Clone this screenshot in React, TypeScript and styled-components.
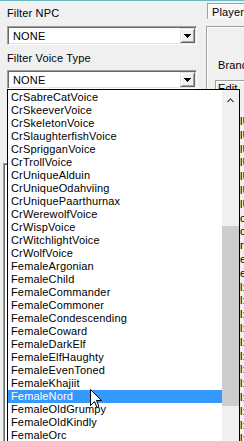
import React from "react";
import styled, { createGlobalStyle } from "styled-components";

const GlobalStyle = createGlobalStyle`
  html, body { margin: 0; padding: 0; background: #f0f0f0; overflow: hidden; }
  body { font-family: "Liberation Sans", Arial, sans-serif; font-size: 11px; color: #000; }
`;

const Window = styled.div`
  position: relative;
  width: 244px;
  height: 441px;
  box-sizing: border-box;
  border-top: 1px solid #69b9c1;
  background: #f0f0f0;
  overflow: hidden;
  display: flex;
  font-family: "Liberation Sans", Arial, sans-serif;
  font-size: 11px;
  line-height: 13px;
  letter-spacing: 0.15px;
  color: #000;
`;

const LeftColumn = styled.div`
  width: 206px;
  flex: none;
  padding-left: 3px;
  box-sizing: border-box;
  display: flex;
  flex-direction: column;
`;

const FieldLabel = styled.div<{ $gap: number }>`
  margin: ${(p) => p.$gap}px 0 0 4px;
  height: 13px;
  white-space: nowrap;
`;

const Combo = styled.div<{ $gap: number }>`
  margin: ${(p) => p.$gap}px 0 0 4px;
  width: 190px;
  height: 19px;
  box-sizing: border-box;
  padding: 1px;
  background: #fff;
  border-style: solid;
  border-width: 1px;
  border-color: #a0a0a0 #fff #fff #a0a0a0;
  box-shadow: inset 1px 1px #696969, inset -1px -1px #e3e3e3;
  display: flex;
`;

const ComboValue = styled.div`
  flex: 1;
  padding: 2px 0 0 4px;
  white-space: nowrap;
`;

const DropButton = styled.div`
  width: 15px;
  height: 15px;
  box-sizing: border-box;
  background: #f0f0f0;
  border-style: solid;
  border-width: 1px;
  border-color: #e3e3e3 #696969 #696969 #e3e3e3;
  box-shadow: inset 1px 1px #fff, inset -1px -1px #a0a0a0;
  display: flex;
  align-items: center;
  justify-content: center;
`;

const HiddenListBox = styled.div`
  margin-top: 74px;
  width: 190px;
  flex: 1;
  background: #fff;
  border-top: 1px solid #a0a0a0;
  border-left: 1px solid #a0a0a0;
  box-shadow: inset 1px 1px #696969;
`;

const RightColumn = styled.div`
  flex: 1;
  min-width: 0;
  display: flex;
  flex-direction: column;
`;

const Tab = styled.div`
  margin: 2px 0 0 1px;
  height: 18px;
  box-sizing: border-box;
  padding: 2px 0 0 4px;
  border-top: 1px solid #a0a0a0;
  border-left: 1px solid #a0a0a0;
  box-shadow: inset 1px 1px #fff;
  background: #f7f7f7;
  white-space: nowrap;
`;

const TabFrame = styled.div`
  margin-top: 7px;
  flex: 1;
  border-top: 1px solid #a0a0a0;
  border-left: 1px solid #a0a0a0;
  box-shadow: inset 1px 1px #fff;
  display: flex;
  flex-direction: column;
`;

const PanelLabel = styled.div`
  margin: 32px 0 0 11px;
  white-space: nowrap;
`;

const EditButton = styled.div`
  margin: 8px 0 0 8px;
  height: 22px;
  box-sizing: border-box;
  padding: 1px 0 0 2px;
  border-top: 1px solid #a0a0a0;
  border-left: 1px solid #a0a0a0;
  box-shadow: inset 1px 1px #fff;
  white-space: nowrap;
`;

const FieldTails = styled.div`
  margin: 13px 0 0 33px;
  display: flex;
  flex-direction: column;
`;

const Tail = styled.div`
  line-height: 13.8px;
  white-space: nowrap;
`;

const DropList = styled.div`
  position: absolute;
  left: 7px;
  top: 88px;
  width: 233px;
  height: 370px;
  box-sizing: border-box;
  border: 1px solid #000;
  background: #fff;
  display: flex;
  z-index: 2;
`;

const Items = styled.div`
  flex: 1;
  min-width: 0;
  padding-top: 1px;
  display: flex;
  flex-direction: column;
`;

const Item = styled.div<{ $selected?: boolean }>`
  height: 13px;
  flex: none;
  padding-left: 3px;
  white-space: nowrap;
  overflow: hidden;
  background: ${(p) => (p.$selected ? "#3399ff" : "transparent")};
  color: ${(p) => (p.$selected ? "#fff" : "#000")};
`;

const ScrollBar = styled.div`
  width: 17px;
  flex: none;
  background: #f0f0f0;
  display: flex;
  flex-direction: column;
`;

const ScrollUp = styled.div`
  height: 17px;
  flex: none;
  display: flex;
  justify-content: center;
  padding-top: 8px;
  box-sizing: border-box;
`;

const Thumb = styled.div<{ $offset: number; $size: number }>`
  margin-top: ${(p) => p.$offset}px;
  height: ${(p) => p.$size}px;
  background: #cdcdcd;
  flex: none;
`;

const Pointer = styled.svg`
  position: absolute;
  left: 90px;
  top: 388px;
  z-index: 3;
`;

const items = [
  "CrSabreCatVoice",
  "CrSkeeverVoice",
  "CrSkeletonVoice",
  "CrSlaughterfishVoice",
  "CrSprigganVoice",
  "CrTrollVoice",
  "CrUniqueAlduin",
  "CrUniqueOdahviing",
  "CrUniquePaarthurnax",
  "CrWerewolfVoice",
  "CrWispVoice",
  "CrWitchlightVoice",
  "CrWolfVoice",
  "FemaleArgonian",
  "FemaleChild",
  "FemaleCommander",
  "FemaleCommoner",
  "FemaleCondescending",
  "FemaleCoward",
  "FemaleDarkElf",
  "FemaleElfHaughty",
  "FemaleEvenToned",
  "FemaleKhajiit",
  "FemaleNord",
  "FemaleOldGrumpy",
  "FemaleOldKindly",
  "FemaleOrc",
  "FemaleShrill",
];

const tails = [
  "lU", "lU", "lU", "lU", "lU", "lU", "lU",
  "c", "c", "r", "e", "e",
  "l:", "l:", "l:", "l:", "l:", "l:", "l:", "l:", "l:", "l:", "l:", "l:",
];

const DownArrow = () => (
  <svg width="7" height="4" viewBox="0 0 7 4" shapeRendering="crispEdges">
    <path d="M0 0h7v1h-1v1h-1v1h-1v1h-1v-1h-1v-1h-1v-1h-1z" fill="#000" />
  </svg>
);

const UpChevron = () => (
  <svg width="7" height="4" viewBox="0 0 7 4" shapeRendering="crispEdges">
    <path
      d="M3 0h1v1h1v1h1v1h1v1h-2v-1h-1v-1h-1v1h-1v1h-2v-1h1v-1h1v-1h1z"
      fill="#606060"
    />
  </svg>
);

export default function App() {
  return (
    <>
      <GlobalStyle />
      <Window>
        <LeftColumn>
          <FieldLabel $gap={6}>Filter NPC</FieldLabel>
          <Combo $gap={6}>
            <ComboValue>NONE</ComboValue>
            <DropButton>
              <DownArrow />
            </DropButton>
          </Combo>
          <FieldLabel $gap={7}>Filter Voice Type</FieldLabel>
          <Combo $gap={5}>
            <ComboValue>NONE</ComboValue>
            <DropButton>
              <DownArrow />
            </DropButton>
          </Combo>
          <HiddenListBox />
        </LeftColumn>
        <RightColumn>
          <Tab>Player</Tab>
          <TabFrame>
            <PanelLabel>Brand</PanelLabel>
            <EditButton>Edit</EditButton>
            <FieldTails>
              {tails.map((t, i) => (
                <Tail key={i}>{t}</Tail>
              ))}
            </FieldTails>
          </TabFrame>
        </RightColumn>
        <DropList>
          <Items>
            {items.map((name) => (
              <Item key={name} $selected={name === "FemaleNord"}>
                {name}
              </Item>
            ))}
          </Items>
          <ScrollBar>
            <ScrollUp>
              <UpChevron />
            </ScrollUp>
            <Thumb $offset={119} $size={180} />
          </ScrollBar>
        </DropList>
        <Pointer width="12" height="19" viewBox="0 0 12 19">
          <path
            d="M0.5 0.5 L0.5 16.5 L4.5 12.5 L7 18.5 L9 17.5 L6.5 11.5 L11.5 11.5 Z"
            fill="#fff"
            stroke="#000"
            strokeWidth="1"
            strokeLinejoin="miter"
          />
        </Pointer>
      </Window>
    </>
  );
}
